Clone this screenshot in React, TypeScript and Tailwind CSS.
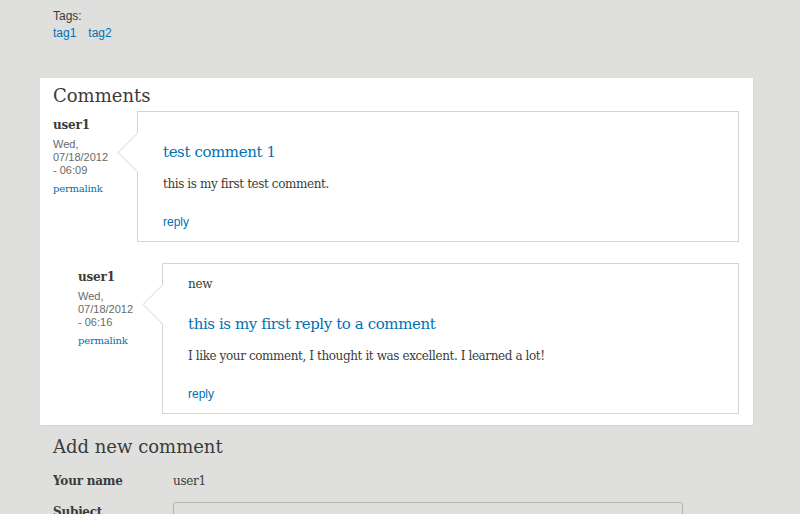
const serif = "font-['DejaVu_Serif',serif]";
const sans = "font-['Liberation_Sans',Arial,sans-serif]";

type Comment = {
  user: string;
  date: string;
  time: string;
  isNew?: boolean;
  title: string;
  body: string;
};

const comments: Comment[] = [
  {
    user: 'user1',
    date: '07/18/2012',
    time: '06:09',
    title: 'test comment 1',
    body: 'this is my first test comment.',
  },
  {
    user: 'user1',
    date: '07/18/2012',
    time: '06:16',
    isNew: true,
    title: 'this is my first reply to a comment',
    body: 'I like your comment, I thought it was excellent. I learned a lot!',
  },
];

function CommentItem({ c, indent }: { c: Comment; indent: boolean }) {
  return (
    <div className={`flex ${indent ? 'pl-[25px] mt-[21px]' : ''}`}>
      <div className="w-[84px] shrink-0 pt-[6px]">
        <div className={`${serif} text-[12px] font-bold tracking-[-0.2px] text-[#3b3b3b] leading-[16px]`}>
          {c.user}
        </div>
        <div className={`${sans} text-[11px] text-[#68696b] leading-[13px] mt-[5px]`}>
          Wed,
          <br />
          {c.date}
          <br />- {c.time}
        </div>
        <a className={`${serif} block text-[10px] tracking-[-0.2px] text-[#0071b3] leading-[14px] mt-[5px]`}>
          permalink
        </a>
      </div>
      <div className="relative flex-1 border border-[#d4d4d4] bg-white pl-[25px] pr-4">
        {/* pointer */}
        <svg
          className="absolute left-[-21px] top-[20px]"
          width="22"
          height="42"
          viewBox="0 0 22 42"
        >
          <path d="M21 0 L1 20.5 L21 41 Z" fill="#fff" />
          <path d="M21 0.5 L1 20.5 L21 40.5" fill="none" stroke="#d4d4d4" strokeWidth="1" />
        </svg>
        {c.isNew && (
          <div className={`${serif} text-[12px] tracking-[-0.3px] text-[#3b3b3b] pt-[12px] leading-[16px]`}>new</div>
        )}
        <h3
          className={`${serif} text-[15px] tracking-[-0.4px] text-[#0071b3] leading-[20px] ${c.isNew ? 'mt-[22px]' : 'mt-[30px]'}`}
        >
          {c.title}
        </h3>
        <p className={`${serif} text-[12px] tracking-[-0.4px] text-[#3b3b3b] leading-[16px] mt-[14px]`}>{c.body}</p>
        <a className={`${sans} block text-[12px] text-[#0071b3] leading-[14px] mt-[23px] mb-[12px]`}>reply</a>
      </div>
    </div>
  );
}

export default function App() {
  return (
    <div className="w-[800px] h-[514px] overflow-hidden bg-[#dfe0de] text-[#3b3b3b]">
      <div className="pl-[53px] pt-[8px] h-[78px]">
        <div className={`${sans} text-[12px] leading-[16px]`}>Tags:</div>
        <div className={`${sans} text-[12px] leading-[18px] text-[#0071b3] flex gap-[12px]`}>
          <a>tag1</a>
          <a>tag2</a>
        </div>
      </div>

      <div className="ml-[40px] w-[713px] h-[347px] bg-white pl-[13px] pr-[14px] pt-[7px] shadow-[1px_1px_0_#d6d7d5]">
        <h2 className={`${serif} text-[18px] leading-[22px] text-[#3b3b3b]`}>Comments</h2>
        <div className="mt-[4px]">
          {comments.map((c, i) => (
            <CommentItem key={i} c={c} indent={i > 0} />
          ))}
        </div>
      </div>

      <div className="pl-[53px] pt-[11px]">
        <h2 className={`${serif} text-[18px] leading-[22px] text-[#3b3b3b]`}>Add new comment</h2>
        <div className="flex items-center mt-[15px]">
          <div className={`${serif} w-[120px] text-[12px] font-bold tracking-[-0.2px] leading-[16px]`}>Your name</div>
          <div className={`${serif} text-[12px] tracking-[-0.3px] leading-[16px]`}>user1</div>
        </div>
        <div className="flex items-start mt-[13px]">
          <div className={`${serif} w-[120px] text-[12px] font-bold tracking-[-0.2px] leading-[16px] pt-[2px]`}>Subject</div>
          <div className="w-[510px] h-[30px] border border-[#b4b4b4] rounded-[3px] bg-[#dfe0de]" />
        </div>
      </div>
    </div>
  );
}
